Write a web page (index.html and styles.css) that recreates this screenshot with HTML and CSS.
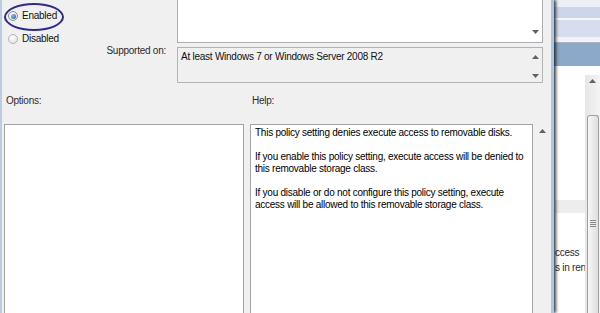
FILE: index.html
```html
<!DOCTYPE html>
<html lang="en">
<head>
  <meta charset="UTF-8" />
  <title>Deny execute access - Removable Disks</title>
  <link rel="stylesheet" href="styles.css">
</head>
<body>
  <div class="screen">

    <!-- policy dialog -->
    <div class="dialog">
      <div class="settings">
        <div class="state">
          <span class="oval"></span>
          <label class="radio-row"><span class="radio checked"></span>Enabled</label>
          <label class="radio-row"><span class="radio"></span>Disabled</label>
        </div>

        <div class="field comment">
          <div class="field-text"></div>
          <div class="field-scroll bottom">
            <svg class="arrow" width="7" height="4" viewBox="0 0 7 4"><path d="M0 0h7L3.5 4z"/></svg>
          </div>
        </div>

        <div class="field-label">Supported on:</div>
        <div class="field supported">
          <div class="field-text">At least Windows 7 or Windows Server 2008 R2</div>
          <div class="field-scroll split">
            <svg class="arrow" width="7" height="4" viewBox="0 0 7 4"><path d="M0 4h7L3.5 0z"/></svg>
            <svg class="arrow" width="7" height="4" viewBox="0 0 7 4"><path d="M0 0h7L3.5 4z"/></svg>
          </div>
        </div>
      </div>

      <div class="panes">
        <div class="pane options">
          <div class="pane-title">Options:</div>
          <div class="pane-body"></div>
        </div>
        <div class="pane help">
          <div class="pane-title">Help:</div>
          <div class="help-body">
            <div class="help-text">
              <p>This policy setting denies execute access to removable disks.</p>
              <p>If you enable this policy setting, execute access will be denied to this removable storage class.</p>
              <p>If you disable or do not configure this policy setting, execute access will be allowed to this removable storage class.</p>
            </div>
            <div class="help-scroll">
              <svg class="arrow" width="7" height="4" viewBox="0 0 7 4"><path d="M0 4h7L3.5 0z"/></svg>
            </div>
          </div>
        </div>
      </div>
    </div>

    <!-- editor window behind the dialog -->
    <div class="backwin">
      <div class="band b1"></div>
      <div class="band b2"></div>
      <div class="band b3"></div>
      <div class="band b4"></div>
      <div class="band b5"></div>
      <div class="band b6"></div>
      <div class="band b7"></div>
      <div class="band b8"></div>
      <div class="bw-main">
        <div class="bw-content">
          <div class="bw-stripe"></div>
          <div class="bw-lines">
            <div>ccess</div>
            <div>s in ren</div>
          </div>
        </div>
        <div class="bw-scroll">
          <svg class="arrow" width="7" height="4" viewBox="0 0 7 4"><path d="M0 4h7L3.5 0z"/></svg>
          <div class="thumb"><span class="grip"></span></div>
        </div>
      </div>
    </div>

  </div>
</body>
</html>
```

FILE: styles.css
```css
* { margin: 0; padding: 0; box-sizing: border-box; }

html, body {
  height: 100%;
  overflow: hidden;
}

body {
  font-family: "Liberation Sans", Arial, sans-serif;
  font-size: 10px;
  line-height: 12px;
  letter-spacing: -0.25px;
  color: #111111;
  background: #ffffff;
}

.screen {
  display: flex;
  height: 313px;
}

/* dialog window */
.dialog {
  width: 554px;
  flex: none;
  display: flex;
  flex-direction: column;
  background: #f0f0f0;
  border-left: 2px solid #bccbdd;
  border-right: 3px solid #a9c6e6;
  box-shadow: 2px 0 3px rgba(0, 0, 0, 0.75);
  position: relative;
  z-index: 1;
}

.settings {
  display: grid;
  grid-template-columns: 175px 366px;
  grid-template-rows: 43px 36px;
  row-gap: 4px;
}

/* enabled / disabled */
.state {
  position: relative;
  padding: 10px 0 0 6px;
}
.radio-row {
  display: flex;
  align-items: center;
  gap: 4px;
  height: 12px;
}
.radio-row + .radio-row { margin-top: 11px; }

.radio {
  width: 10px;
  height: 10px;
  border-radius: 50%;
  border: 1px solid #b5b5b5;
  background: radial-gradient(circle at 40% 35%, #ffffff, #dcdcdc);
  display: flex;
  justify-content: center;
  align-items: center;
}
.radio.checked {
  border-color: #8e8f8f;
}
.radio.checked::after {
  content: "";
  width: 5px;
  height: 5px;
  border-radius: 50%;
  background: radial-gradient(circle at 35% 35%, #8cc0ee, #1f4f8a);
}

/* hand-drawn highlight */
.oval {
  position: absolute;
  left: 2px;
  top: 3px;
  width: 60px;
  height: 28px;
  border: 2px solid #2f2c88;
  border-radius: 50%;
}

/* text fields */
.field {
  display: flex;
  border: 1px solid #abadb3;
}
.field-text { flex: 1; }
.field-scroll {
  width: 13px;
  display: flex;
  flex-direction: column;
  align-items: center;
}
.field-scroll.bottom {
  justify-content: flex-end;
  padding-bottom: 8px;
}
.field-scroll.split {
  justify-content: space-between;
  padding: 7px 0 4px;
}

.comment {
  background: #ffffff;
  border-top: none;
}

.field-label {
  text-align: right;
  padding-right: 11px;
  margin-top: -2px;
  color: #2b2b2b;
}

.supported {
  background: #f0f0f0;
  border-color: #b4b4b4;
}
.supported .field-text { padding: 3px 3px; }

.arrow { fill: #626262; display: block; }

/* options / help */
.panes {
  flex: 1;
  display: flex;
  gap: 6px;
  padding: 12px 0 0 2px;
  min-height: 0;
}
.pane {
  display: flex;
  flex-direction: column;
}
.pane.options { width: 240px; }
.pane.help { flex: 1; }

.pane-title {
  padding-left: 2px;
  margin-bottom: 17px;
  color: #2b2b2b;
}

.pane-body {
  flex: 1;
  background: #ffffff;
  border: 1px solid #a3a3a3;
  border-bottom: none;
}

.help-body {
  flex: 1;
  display: flex;
}
.help-text {
  flex: 1;
  background: #ffffff;
  border: 1px solid #a3a3a3;
  border-bottom: none;
  padding: 2px 4px;
  color: #000000;
}
.help-text p { margin-bottom: 12px; }

.help-scroll {
  width: 18px;
  display: flex;
  justify-content: center;
  padding-top: 5px;
}

/* window behind */
.backwin {
  flex: 1;
  display: flex;
  flex-direction: column;
  background: #ffffff;
  overflow: hidden;
}
.band { flex: none; }
.b1 { height: 7px;  background: #eceff6; }
.b2 { height: 11px; background: #ccd5e9; }
.b3 { height: 2px;  background: #f4f6fa; }
.b4 { height: 17px; background: #d5ddee; }
.b5 { height: 5px;  background: #f1f3f8; }
.b6 { height: 1px;  background: #a9b4c6; }
.b7 { height: 23px; background: #8da9c9; }
.b8 { height: 9px;  background: #ffffff; }

.bw-main {
  flex: 1;
  display: flex;
}
.bw-content {
  flex: 1;
  overflow: hidden;
  white-space: nowrap;
  padding-left: 1px;
}
.bw-stripe {
  height: 13px;
  margin-top: 125px;
  background: #ededed;
}
.bw-lines {
  margin-top: 32px;
  line-height: 15px;
  color: #2a2a2a;
}

.bw-scroll {
  width: 15px;
  display: flex;
  flex-direction: column;
  align-items: center;
  background: linear-gradient(to right, #e6e6e6, #f4f4f4);
  padding-top: 4px;
}
.thumb {
  margin-top: 32px;
  width: 12px;
  flex: 1;
  border: 1px solid #a0a0a0;
  border-bottom: none;
  border-radius: 3px 3px 0 0;
  background: linear-gradient(to right, #f6f6f6, #dedede);
  display: flex;
  justify-content: center;
  padding-top: 104px;
}
.grip {
  width: 6px;
  height: 7px;
  background: repeating-linear-gradient(to bottom, #8a8a8a 0, #8a8a8a 1px, transparent 1px, transparent 2px);
}
```
